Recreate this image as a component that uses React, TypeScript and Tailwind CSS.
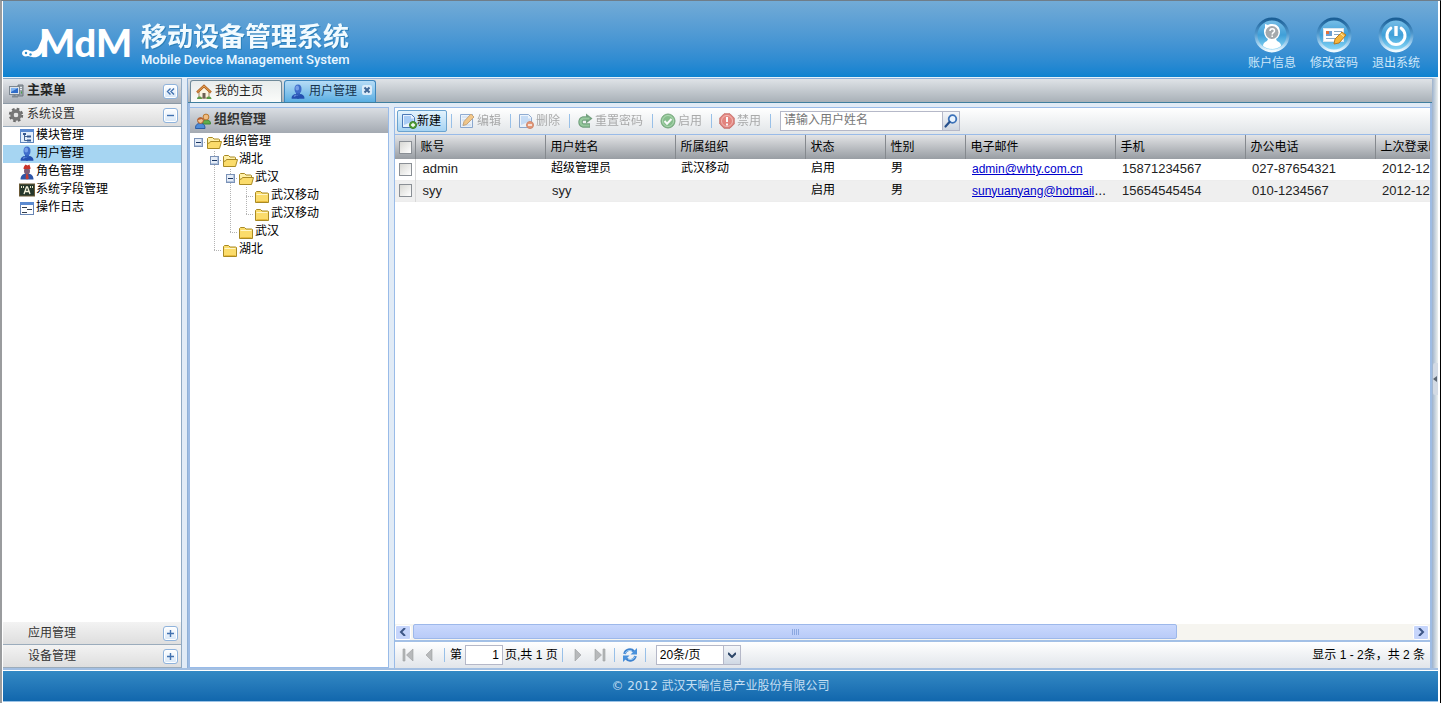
import React, { useState } from 'react';

type IconName =
  | 'computer' | 'gear' | 'module' | 'user' | 'role' | 'field' | 'log' | 'home' | 'group'
  | 'add' | 'edit' | 'delete' | 'reset' | 'enable' | 'disable' | 'search' | 'folder' | 'folderOpen'
  | 'first' | 'prev' | 'next' | 'last' | 'refresh';

const ICONS: Record<IconName, React.ReactNode> = {
  computer: (
    <>
      <path d="M10 2h5v11h-5z" fill="#9ba3ab" stroke="#6e767e" />
      <path d="M12 4.5h2M12 6.5h2" stroke="#e9edf0" />
      <path d="M13 9.5h1" stroke="#46a846" strokeWidth="2" />
      <rect x="1.5" y="3.5" width="10" height="8" fill="#dde3e9" stroke="#7d8791" />
      <rect x="3" y="5" width="7" height="5" fill="#2f6cc9" />
      <path d="M3 5h7L3 9z" fill="#7fb2f0" />
      <path d="M4 13.5h6M6.5 12v1" stroke="#7d8791" strokeWidth="2" />
    </>
  ),
  gear: (
    <>
      <circle cx="8" cy="8" r="5.8" fill="none" stroke="#6b6b6b" strokeWidth="2.8" strokeDasharray="2.5 2.05" />
      <circle cx="8" cy="8" r="4" fill="none" stroke="#777" strokeWidth="3.4" />
      <circle cx="8" cy="8" r="2" fill="#e4e4e4" />
    </>
  ),
  module: (
    <>
      <rect x="1.5" y="1.5" width="13" height="13" fill="#e3eefb" stroke="#5f86bd" />
      <path d="M1 2.5h14" stroke="#5b8ad0" strokeWidth="3" />
      <path d="M5.5 6v6.5H8M5.5 8.5H8" fill="none" stroke="#44638f" />
      <path d="M4 5h3v2H4zM8 7.5h4v2H8zM8 11.5h4v2H8z" fill="#35588f" />
    </>
  ),
  user: (
    <>
      <path d="M1.5 14.5c0-3 2-4.5 4.5-4.5h4c2.5 0 4.5 1.5 4.5 4.5 0 .5-13 .5-13 0z" fill="#2450b0" />
      <path d="M4 12.5c1-1.5 2.5-1.5 4-1.5" fill="none" stroke="#6189d8" strokeWidth="1.5" />
      <path d="M6 8h4v3.5H6z" fill="#2f5cba" />
      <ellipse cx="8" cy="5" rx="3.5" ry="4.5" fill="#3f6dca" />
      <ellipse cx="7.2" cy="4" rx="1.9" ry="2.5" fill="#769fe8" />
    </>
  ),
  role: (
    <>
      <path d="M1.5 15.5c0-3.5 2-5.5 4.5-5.5h4c2.5 0 4.5 2 4.5 5.5z" fill="#2d55a8" />
      <path d="M7 10h2l.8 4.5L8 15.5l-1.5-1z" fill="#c43b32" />
      <ellipse cx="8" cy="7" rx="3" ry="3.6" fill="#7b5a76" />
      <path d="M4.5 5c0-3 1.5-3.5 2-4.5l2 1 2-1c0 1.5 1.2 2 1 4.5z" fill="#c8342a" />
    </>
  ),
  field: (
    <>
      <rect x=".5" y="2" width="15" height="12" fill="#26382c" stroke="#6b5a36" />
      <path d="M2.5 4v2M4.5 4v2M11.5 4v2M13.5 4v2" stroke="#e8e6c8" />
      <path d="M5 12l2.5-7h1L11 12M6 9.5h4" fill="none" stroke="#f5f3dc" strokeWidth="1.3" />
    </>
  ),
  log: (
    <>
      <rect x="1.5" y="2.5" width="13" height="12" fill="#fdfeff" stroke="#6885b4" />
      <path d="M1 3.5h14" stroke="#5b8ad0" strokeWidth="3" />
      <path d="M3 7.5h5M8 9.5h5M3 12.5h5" stroke="#333d4c" />
    </>
  ),
  home: (
    <>
      <path d="M3 8l5-5 5 5v6H3z" fill="#fbf4e2" stroke="#a88a5c" />
      <path d="M6.5 9h3v5.5h-3z" fill="#6d6155" />
      <path d="M1 8.5L8 2l7 6.5" fill="none" stroke="#b4692a" strokeWidth="2.4" />
      <path d="M1.5 8L8 2l6.5 6" fill="none" stroke="#e9a14f" />
      <path d="M1 15c0-2 1.5-2.5 3-2.5S6 14 6 15zM10.5 15c0-2 1-2.5 2.5-2.5s2.500 1 2.500 2.500z" fill="#5a9a48" />
    </>
  ),
  group: (
    <>
      <path d="M7.5 11c0-3.500 1.500-4 4-4s4 1 4 4z" fill="#5fae4c" stroke="#3f8436" />
      <circle cx="11" cy="4" r="2.9" fill="#f0bd83" stroke="#b9772e" />
      <path d="M.5 15.5c0-4 1.800-5 4.800-5s4.700 1 4.700 5z" fill="#4f8cd8" stroke="#2a5ca3" />
      <circle cx="5.5" cy="7.5" r="2.9" fill="#f3c38f" stroke="#a4572a" />
      <path d="M2.5 7c0-3 6-3 6 0L7 6z" fill="#b85d2d" />
    </>
  ),
  add: (
    <>
      <path d="M1.5 1.5h9l3 3v10h-12z" fill="#e8f2fd" stroke="#4b79b8" />
      <path d="M3 3h7v2.5h2.5V8L3 12z" fill="#a9ccf5" />
      <circle cx="12" cy="12" r="3.5" fill="#58a63c" stroke="#3b7d27" />
      <path d="M10 12h4M12 10v4" stroke="#fff" strokeWidth="1.3" />
    </>
  ),
  edit: (
    <>
      <path d="M1.5 1.5h12v13h-12z" fill="#e8f2fd" stroke="#4b79b8" />
      <path d="M3 4h8M3 7h5M3 12h9" stroke="#a9c5ea" />
      <path d="M4 12.5l1-4L12 1l3 3-7.5 7.5z" fill="#f2ab45" stroke="#a9702c" />
    </>
  ),
  delete: (
    <>
      <path d="M1.5 1.5h9l3 3v10h-12z" fill="#e8f2fd" stroke="#4b79b8" />
      <path d="M3 3h7v2.5h2.5V8L3 12z" fill="#a9ccf5" />
      <circle cx="12" cy="12" r="3.5" fill="#e05f28" stroke="#b8451a" />
      <path d="M10 12h4" stroke="#fff" strokeWidth="1.5" />
    </>
  ),
  reset: (
    <>
      <path d="M13 12.5H6A3.7 3.7 0 016 5.5H11" fill="none" stroke="#1f6a30" strokeWidth="4.4" />
      <path d="M9 .5l6.5 5L9 10.5z" fill="#1f6a30" />
      <path d="M12.5 12.5H6A3.7 3.7 0 016 5.5H12.5" fill="none" stroke="#5cb066" strokeWidth="2.2" />
    </>
  ),
  enable: (
    <>
      <circle cx="8" cy="8" r="7" fill="#3f9a48" stroke="#27742f" />
      <circle cx="8" cy="8" r="5.5" fill="none" stroke="#86c98a" />
      <path d="M4.5 8l2.5 2.7L11.5 6" fill="none" stroke="#fff" strokeWidth="2" />
    </>
  ),
  disable: (
    <>
      <path d="M5 .8h6L15.2 5v6L11 15.2H5L.8 11V5z" fill="#db3b30" stroke="#a8231b" />
      <circle cx="8" cy="8" r="5.5" fill="none" stroke="#f1938b" />
      <path d="M8 4v5M8 10.5v2" stroke="#fff" strokeWidth="2" />
    </>
  ),
  search: (
    <>
      <circle cx="9.5" cy="6" r="3.8" fill="#eaf4ff" stroke="#3c72b9" strokeWidth="1.8" />
      <path d="M6.5 9l-4 4.5" stroke="#27508c" strokeWidth="2.2" strokeLinecap="round" />
    </>
  ),
  folder: (
    <>
      <path d="M1.5 14.5v-10l1-1h4l1.5 1.5h5.5l1 .5v9z" fill="#fbdc6b" stroke="#a98a24" />
      <path d="M2.5 6.5h11" stroke="#fff6c8" />
      <path d="M2.5 13.5h11" stroke="#e9bb3c" />
    </>
  ),
  folderOpen: (
    <>
      <path d="M1.5 13.5v-9l1-1h4l1.5 1.5h4.5l1 .5v2" fill="#fff0a8" stroke="#a98a24" />
      <path d="M1.5 14.5h12l2-7h-11l-1.500 2-1.500-1z" fill="#fbdc6b" stroke="#a98a24" />
    </>
  ),
  first: <path d="M3 2v12h2V2zM13 2v12L6.5 8z" fill="#b7b9bb" stroke="#9c9ea0" strokeWidth=".6" />,
  prev: <path d="M11 2v12L5 8z" fill="#b7b9bb" stroke="#9c9ea0" strokeWidth=".6" />,
  next: <path d="M5 2v12l6-6z" fill="#b7b9bb" stroke="#9c9ea0" strokeWidth=".6" />,
  last: <path d="M11 2v12h2V2zM3 2v12l6.5-6z" fill="#b7b9bb" stroke="#9c9ea0" strokeWidth=".6" />,
  refresh: (
    <>
      <path d="M2.5 7A5.5 5.5 0 0112 4.5M13.5 9A5.5 5.5 0 014 11.5" fill="none" stroke="#3f83cf" strokeWidth="2.6" />
      <path d="M15 1v6.5H8.500zM1 15V8.500h6.500z" fill="#4a92dc" />
      <path d="M3 6.5A5 5 0 0110 4M13 9.5A5 5 0 016 12" fill="none" stroke="#9ccdf6" />
    </>
  ),
};

function Icon({ name }: { name: IconName }) {
  return (
    <svg viewBox="0 0 16 16" className="size-4 shrink-0" aria-hidden="true">
      {ICONS[name]}
    </svg>
  );
}

const MENU: { icon: IconName; label: string }[] = [
  { icon: 'module', label: '模块管理' },
  { icon: 'user', label: '用户管理' },
  { icon: 'role', label: '角色管理' },
  { icon: 'field', label: '系统字段管理' },
  { icon: 'log', label: '操作日志' },
];

// 树节点前面的引导线: b 空白, l 竖线, t 三通, e 拐角, m 展开(减号), r 根节点展开
const TREE: { guides: string; label: string; leaf?: boolean }[] = [
  { guides: 'r', label: '组织管理' },
  { guides: 'bm', label: '湖北' },
  { guides: 'blm', label: '武汉' },
  { guides: 'bllt', label: '武汉移动', leaf: true },
  { guides: 'blle', label: '武汉移动', leaf: true },
  { guides: 'ble', label: '武汉', leaf: true },
  { guides: 'be', label: '湖北', leaf: true },
];

const COLUMNS = [
  { title: '账号', width: 130 },
  { title: '用户姓名', width: 130 },
  { title: '所属组织', width: 130 },
  { title: '状态', width: 80 },
  { title: '性别', width: 80 },
  { title: '电子邮件', width: 150 },
  { title: '手机', width: 130 },
  { title: '办公电话', width: 130 },
  { title: '上次登录时间', width: 376 },
];

const USERS = [
  ['admin', '超级管理员', '武汉移动', '启用', '男', 'admin@whty.com.cn', '15871234567', '027-87654321', '2012-12-'],
  ['syy', 'syy', '', '启用', '男', 'sunyuanyang@hotmail.com', '15654545454', '010-1234567', '2012-12-'],
];

const TOOLS: { icon: IconName; label: string }[] = [
  { icon: 'edit', label: '编辑' },
  { icon: 'delete', label: '删除' },
  { icon: 'reset', label: '重置密码' },
  { icon: 'enable', label: '启用' },
  { icon: 'disable', label: '禁用' },
];

// 邮件列用小一号的字, 中文单元格略微上移
function cellClass(value: string, isMail: boolean) {
  if (isMail) return 'pl-[7px] text-xs leading-5';
  if (/^[\x00-\x7f]+$/.test(value)) return 'pl-[7px] text-[13px] leading-5 text-[#222]';
  return 'pb-[2px] pl-[6px] leading-[18px]';
}

function Guide({ type }: { type: string }) {
  const dots = { stroke: '#b4b4b4', strokeDasharray: '1 1' };
  return (
    <svg viewBox="0 0 16 18" className="h-[18px] w-4 shrink-0" aria-hidden="true">
      {'lt'.includes(type) && <path d="M8.5 0v18" {...dots} />}
      {type === 'm' && <path d="M8.5 0v18M8 9.5h8" {...dots} />}
      {type === 'e' && <path d="M8.5 0v10" {...dots} />}
      {'ter'.includes(type) && <path d="M8 9.5h8" {...dots} />}
      {'mr'.includes(type) && (
        <>
          <rect x="4.5" y="5.5" width="8" height="8" fill="#e6edf7" stroke="#7b93b8" />
          <path d="M5 12.5h7M11.5 6v7" stroke="#b3c4de" />
          <path d="M6 9.5h5" stroke="#1b3763" />
        </>
      )}
    </svg>
  );
}

function ToolButton({ label, children }: { label: string; children: React.ReactNode }) {
  return (
    <button
      type="button"
      aria-label={label}
      className="flex size-[15px] shrink-0 items-center justify-center rounded-[3px] border border-[#8fb3dc] bg-gradient-to-b from-white to-[#d7e7f8] shadow-[inset_0_0_0_1px_#fff]"
    >
      <svg viewBox="0 0 11 11" className="size-[11px]" fill="none" stroke="#4272b0" strokeWidth="1.4">
        {children}
      </svg>
    </button>
  );
}

const Separator = () => <span className="mx-1 h-[14px] w-px shrink-0 bg-[#98c0e8]" />;

function Badge({ id, children }: { id: string; children: React.ReactNode }) {
  return (
    <svg viewBox="0 0 36 36" className="size-9" aria-hidden="true">
      <defs>
        <linearGradient id={`${id}-ring`} x1="0" y1="0" x2="0" y2="1">
          <stop offset="0" stopColor="#1b5f96" />
          <stop offset=".45" stopColor="#4f97cc" />
          <stop offset=".8" stopColor="#a9d6f2" />
          <stop offset="1" stopColor="#f2fbff" />
        </linearGradient>
        <linearGradient id={`${id}-disc`} x1="0" y1="0" x2="0" y2="1">
          <stop offset="0" stopColor="#7cc0e8" />
          <stop offset=".5" stopColor="#3f9fd8" />
          <stop offset="1" stopColor="#8fdcf9" />
        </linearGradient>
      </defs>
      <circle cx="18" cy="18" r="16" fill={`url(#${id}-disc)`} stroke={`url(#${id}-ring)`} strokeWidth="3" />
      {children}
    </svg>
  );
}

export default function App() {
  const [active, setActive] = useState('用户管理');
  const [keyword, setKeyword] = useState('');
  const [page, setPage] = useState('1');

  return (
    <div className="flex h-screen flex-col overflow-hidden border-t border-r border-l-2 border-t-[#6f7d88] border-r-black border-l-[#9a9c9e] bg-white pr-[2px] pl-px font-['Liberation_Sans','Noto_Sans_CJK_SC',sans-serif] text-xs text-black">
      <header className="flex h-[76px] shrink-0 items-start justify-between bg-gradient-to-b from-[#72abd6] to-[#0a82d0] px-[18px] text-white">
        <div className="flex items-start pt-[21px]">
          <svg viewBox="0 0 118 40" className="h-10 w-[118px] overflow-visible" role="img" aria-label="MdM">
            <path d="M1 31c1-4 5-4 8-2 3 1 6 0 8-3L23 12l5 4-6 13c-3 6-7 7-11 6-2 0-3-1-4-1-3 1-6 0-6-3z" fill="#fff" />
            <circle cx="5" cy="31" r="1.2" fill="#2f8dcc" />
            <circle cx="9.5" cy="32.5" r="1.2" fill="#2f8dcc" />
            <text x="18" y="35" fill="#fff" className="font-['Lato',sans-serif] text-[38px] font-black">MdM</text>
          </svg>
          <div className="pl-[2px]">
            <h1 className="text-[26px] leading-[30px] font-bold text-[#f2fbff] drop-shadow-[1px_1px_0_#2c7fb8]">移动设备管理系统</h1>
            <p className="font-['Roboto',sans-serif] text-[13px] leading-[15px] font-medium text-[#e8f6ff]">Mobile Device Management System</p>
          </div>
        </div>
        <nav className="flex gap-[14px] pt-4">
          <a href="#account" className="flex w-12 flex-col items-center text-[#cfe8fa]">
            <Badge id="account">
              <path d="M18 7c5 0 8 3 8 8 0 3-2 6-4 7l1 2c3 1 4 3 4 5-5 4-13 4-18 0 0-2 1-4 4-5l1-2c-2-1-4-4-4-7 0-2 0-3 1-4L11 7l3 1c1-1 2-1 4-1z" fill="#fff" />
              <circle cx="18" cy="15.5" r="6.5" fill="#a4a9ad" />
              <path d="M16 14c0-3 4.5-3 4.5 0 0 1.5-2.3 1.5-2.3 3.5M18.2 18.5v1.5" fill="none" stroke="#fff" strokeWidth="1.5" />
            </Badge>
            <span className="leading-5">账户信息</span>
          </a>
          <a href="#password" className="flex w-12 flex-col items-center text-[#cfe8fa]">
            <Badge id="password">
              <rect x="7.5" y="11.5" width="20" height="13" fill="#fff" stroke="#d9e6ef" />
              <path d="M10 14h6v5h-6z" fill="#6b9fd4" />
              <path d="M10 14h3v3h-3z" fill="#e3743c" />
              <path d="M18 14.5h8M18 17.5h8M10 21.5h9" stroke="#8aa9c4" />
              <path d="M18 27l1-5 7-7 4 3-7 8z" fill="#f5b53b" stroke="#b97a1e" />
              <path d="M24.5 16.5l3.5 3" stroke="#fff0b8" />
            </Badge>
            <span className="leading-5">修改密码</span>
          </a>
          <a href="#logout" className="flex w-12 flex-col items-center text-[#cfe8fa]">
            <Badge id="logout">
              <path d="M12.8 11.2a9 9 0 1010.4 0" fill="none" stroke="#fff" strokeWidth="3" strokeLinecap="round" />
              <path d="M18 9v10" stroke="#fff" strokeWidth="3.4" />
            </Badge>
            <span className="leading-5">退出系统</span>
          </a>
        </nav>
      </header>

      <div className="flex min-h-0 flex-1 border-t border-b-2 border-t-[#e6f2fb] border-b-[#a3bfe2] bg-[#e1ebf6]">
        <aside className="flex w-[179px] shrink-0 flex-col border-t border-r border-[#8fa9c2] bg-white">
          <div className="flex h-[25px] shrink-0 items-center border-b border-[#8c99a5] bg-gradient-to-b from-[#e4e7eb] to-[#a9afb7] pr-[3px] pl-[5px]">
            <Icon name="computer" />
            <h2 className="flex-1 pb-[2px] pl-[3px] text-[13px] font-bold text-[#222]">主菜单</h2>
            <ToolButton label="折叠菜单"><path d="M5.5 2.5l-3 3 3 3M9 2.5l-3 3 3 3" /></ToolButton>
          </div>
          <div className="flex h-[23px] shrink-0 items-center border-b border-[#9bacbc] bg-gradient-to-b from-[#f6f6f6] to-[#dcdcdc] pr-[3px] pl-[5px]">
            <Icon name="gear" />
            <h3 className="flex-1 pb-[2px] pl-[3px] text-[#333]">系统设置</h3>
            <ToolButton label="收起"><path d="M2 5.5h7" /></ToolButton>
          </div>
          <ul className="flex-1">
            {MENU.map(item => (
              <li key={item.label}>
                <button
                  type="button"
                  onClick={() => setActive(item.label)}
                  className={`flex h-[18px] w-full items-center gap-px pl-4 text-left ${active === item.label ? 'bg-[#a6d5f2]' : ''}`}
                >
                  <Icon name={item.icon} />
                  <span className="pb-[2px] leading-4">{item.label}</span>
                </button>
              </li>
            ))}
          </ul>
          {['应用管理', '设备管理'].map(title => (
            <div key={title} className="flex h-[23px] shrink-0 items-center border-b border-[#9bacbc] bg-gradient-to-b from-[#f3f3f3] to-[#dedede] pr-[3px] pl-[25px]">
              <h3 className="flex-1 text-[#333]">{title}</h3>
              <ToolButton label={`展开${title}`}><path d="M2 5.5h7M5.5 2v7" /></ToolButton>
            </div>
          ))}
        </aside>

        <main className="ml-[5px] flex min-w-0 flex-1 flex-col border-t border-l border-[#8fb0d6]">
          <div className="flex h-[24px] shrink-0 items-end gap-[2px] border-b border-[#3f7f9f] bg-gradient-to-b from-[#dfe3e7] to-[#a9b1b8] pl-[2px]">
            <button type="button" className="flex h-[22px] w-[92px] items-center rounded-t-[3px] border border-b-0 border-[#6f8a9a] bg-gradient-to-b from-[#e8ecec] to-[#fbfcfa] pl-[5px]">
              <Icon name="home" />
              <span className="pb-[2px] pl-[3px] text-[#222]">我的主页</span>
            </button>
            <div className="flex h-[22px] w-[92px] items-center rounded-t-[3px] border border-b-0 border-[#3d86bd] bg-gradient-to-b from-[#b6dcf6] to-[#58aee2] pl-[5px]">
              <button type="button" className="flex items-center">
                <Icon name="user" />
                <span className="pb-[2px] pl-[3px] text-[#16324d]">用户管理</span>
              </button>
              <button type="button" aria-label="关闭" className="mb-1 ml-[5px] flex size-[10px] items-center justify-center rounded-[2px] bg-[#dcecf9]">
                <svg viewBox="0 0 8 8" className="size-2" stroke="#3f6594" strokeWidth="2"><path d="M1.5 1.5l5 5M6.5 1.5l-5 5" /></svg>
              </button>
            </div>
          </div>

          <div className="flex min-h-0 flex-1 border-r-2 border-l-2 border-[#9ebce4] pt-1">
            <section className="flex w-[199px] shrink-0 flex-col border border-l-0 border-[#99bbe8] bg-white">
              <div className="flex h-[25px] shrink-0 items-center bg-gradient-to-b from-[#dadee3] to-[#a4aab2] pl-[5px]">
                <Icon name="group" />
                <h2 className="pb-1 pl-[3px] text-[13px] font-bold text-[#333]">组织管理</h2>
              </div>
              <ul>
                {TREE.map((node, i) => (
                  <li key={i} className="flex h-[18px] items-center">
                    {node.guides.split('').map((g, j) => <Guide key={j} type={g} />)}
                    <Icon name={node.leaf ? 'folder' : 'folderOpen'} />
                    <a href="#node" className="pb-[2px] pl-px leading-4">{node.label}</a>
                  </li>
                ))}
              </ul>
            </section>

            <section className="ml-[5px] flex min-w-0 flex-1 flex-col border-t border-l border-[#99bbe8] bg-white">
              <div className="flex h-[27px] shrink-0 items-center border-b border-[#99bbe8] bg-gradient-to-b from-white to-[#e1e5e8] pl-[2px]">
                <button type="button" className="flex h-[22px] items-center rounded-[2px] border border-[#6ba3cf] bg-gradient-to-b from-[#e4f3fd] to-[#a5d3f3] pr-[5px] pl-[3px]">
                  <Icon name="add" />
                  新建
                </button>
                {TOOLS.map(tool => (
                  <React.Fragment key={tool.label}>
                    <Separator />
                    <button type="button" disabled className="flex h-[22px] items-center gap-[2px] pr-[5px] pl-[3px] text-[#777] opacity-60">
                      <Icon name={tool.icon} />
                      {tool.label}
                    </button>
                  </React.Fragment>
                ))}
                <Separator />
                <form className="ml-[5px] flex h-5" onSubmit={e => e.preventDefault()}>
                  <input
                    type="text"
                    aria-label="用户姓名"
                    placeholder="请输入用户姓名"
                    value={keyword}
                    onChange={e => setKeyword(e.target.value)}
                    className="w-[163px] border border-[#b5b8c8] bg-white px-[3px] pb-[2px] text-xs placeholder:text-[#777]"
                  />
                  <button type="submit" aria-label="搜索" className="flex w-[17px] items-center justify-center border border-l-0 border-[#b5b8c8] bg-gradient-to-b from-[#f4f6f9] to-[#cfd6e0]">
                    <Icon name="search" />
                  </button>
                </form>
              </div>

              <div className="min-h-0 flex-1 overflow-hidden">
                <table className="w-[1356px] table-fixed border-collapse">
                  <colgroup>
                    <col className="w-5" />
                    {COLUMNS.map(col => <col key={col.title} style={{ width: col.width }} />)}
                  </colgroup>
                  <thead>
                    <tr className="h-6 bg-gradient-to-b from-[#e3e4e6] to-[#989da3]">
                      <th className="border-r border-[#85898e] p-0 pl-1 text-left">
                        <input type="checkbox" aria-label="全选" className="block size-[13px] appearance-none border border-[#8a8f95] bg-gradient-to-br from-[#d8d8d4] to-white" />
                      </th>
                      {COLUMNS.map(col => (
                        <th key={col.title} className="border-r border-[#85898e] p-0 pb-px pl-[5px] text-left font-normal">{col.title}</th>
                      ))}
                    </tr>
                  </thead>
                  <tbody>
                    {USERS.map(user => (
                      <tr key={user[0]} className="h-[21px] border-b border-[#ededed] even:bg-[#efefef]">
                        <td className="border-r border-[#d8d8d8] p-0 pl-1">
                          <input type="checkbox" aria-label={`选择 ${user[0]}`} className="block size-[13px] appearance-none border border-[#8a8f95] bg-gradient-to-br from-[#d8d8d4] to-white" />
                        </td>
                        {user.map((value, i) => (
                          <td key={i} className={`truncate pr-[7px] ${cellClass(value, i === 5)}`}>
                            {i === 5 ? <a href={`mailto:${value}`} className="text-[#0000cc] underline">{value}</a> : value}
                          </td>
                        ))}
                      </tr>
                    ))}
                  </tbody>
                </table>
              </div>

              <div className="flex h-4 shrink-0 items-center bg-[#f6f5f0]">
                <button type="button" aria-label="向左滚动" className="flex h-[15px] w-4 items-center justify-center rounded-[2px] border border-white bg-[#c6d5fb]">
                  <svg viewBox="0 0 8 8" className="size-2" fill="none" stroke="#3d5685" strokeWidth="2"><path d="M6 0L2 4l4 4" /></svg>
                </button>
                <div className="h-full flex-1 pl-[2px]">
                  <div className="flex h-[15px] w-[76.4%] items-center justify-center gap-px rounded-[2px] border border-[#9db8ea] bg-gradient-to-b from-[#c9d8fd] to-[#b9cbf8]">
                    {[0, 1, 2, 3].map(n => <span key={n} className="h-[6px] w-px bg-[#8ca8e0]" />)}
                  </div>
                </div>
                <button type="button" aria-label="向右滚动" className="mr-px flex h-[15px] w-4 items-center justify-center rounded-[2px] border border-white bg-[#c6d5fb]">
                  <svg viewBox="0 0 8 8" className="size-2" fill="none" stroke="#3d5685" strokeWidth="2"><path d="M2 0l4 4-4 4" /></svg>
                </button>
              </div>

              <div className="flex h-7 shrink-0 items-center border-t-2 border-[#a3c0e6] bg-gradient-to-b from-white to-[#e1e5ea] px-[5px]">
                <button type="button" aria-label="第一页" disabled className="mr-[5px]"><Icon name="first" /></button>
                <button type="button" aria-label="上一页" disabled className="mr-[3px]"><Icon name="prev" /></button>
                <Separator />
                <label className="flex items-center gap-[3px] pl-px">
                  第
                  <input
                    type="text"
                    value={page}
                    onChange={e => setPage(e.target.value)}
                    className="h-5 w-[38px] border border-[#b5b8c8] bg-white px-[3px] text-right"
                  />
                </label>
                <span className="pl-[2px]">页,共 1 页</span>
                <Separator />
                <button type="button" aria-label="下一页" disabled className="mr-[6px] ml-[3px]"><Icon name="next" /></button>
                <button type="button" aria-label="最后一页" disabled className="mr-[2px]"><Icon name="last" /></button>
                <Separator />
                <button type="button" aria-label="刷新" className="mx-[3px]"><Icon name="refresh" /></button>
                <Separator />
                <div className="relative ml-[6px] flex">
                  <select aria-label="每页条数" className="h-5 w-[85px] appearance-none border border-[#b5b8c8] bg-white pl-[3px] text-xs">
                    <option>20条/页</option>
                    <option>50条/页</option>
                  </select>
                  <span className="pointer-events-none absolute inset-y-0 right-0 flex w-[18px] items-center justify-center border border-[#b5b8c8] bg-gradient-to-b from-[#f4f6f9] to-[#cfd8e4]">
                    <svg viewBox="0 0 8 6" className="h-[6px] w-2" fill="none" stroke="#2c4668" strokeWidth="2"><path d="M0 1l4 4 4-4" /></svg>
                  </span>
                </div>
                <span className="ml-auto">显示 1 - 2条，共 2 条</span>
              </div>
            </section>
          </div>
        </main>

        <button type="button" aria-label="展开右侧面板" className="flex w-[6px] shrink-0 items-center justify-end bg-gradient-to-r from-[#9db2cc] to-[#edf0ee] pt-3">
          <span className="flex h-8 w-[5px] items-center rounded-l-[2px] bg-[#d3dae4]">
            <svg viewBox="0 0 4 6" className="h-[6px] w-1"><path d="M4 0v6L0 3z" fill="#5c6672" /></svg>
          </span>
        </button>
      </div>

      <footer className="mb-px flex h-8 shrink-0 items-center justify-center border-t border-b border-t-white border-b-[#9cc3e6] bg-gradient-to-b from-[#3389c4] to-[#1167ad] font-['DejaVu_Sans','Noto_Sans_CJK_SC',sans-serif] text-[#c5dff3]">
        © 2012 武汉天喻信息产业股份有限公司
      </footer>
    </div>
  );
}
